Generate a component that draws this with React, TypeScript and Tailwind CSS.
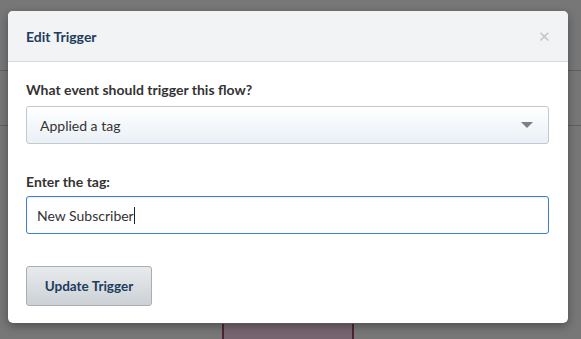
import React from "react";

export default function App() {
  return (
    <div
      className="relative w-[581px] h-[339px] overflow-hidden bg-[#777777]"
      style={{ fontFamily: "Lato, 'Open Sans', sans-serif" }}
    >
      {/* background page */}
      <div className="flex flex-col">
        <div className="h-[70px]" />
        <div className="h-px bg-[#5f5f5f]" />
        <div className="h-[54px]" />
        <div className="h-px bg-[#5f5f5f]" />
        <div className="h-[198px]" />
        <div className="ml-[222px] w-[132px] h-[40px] border-x-2 border-[#4d2338] bg-[#766570]" />
      </div>

      {/* modal */}
      <div className="absolute left-[8px] top-[11px] w-[560px] h-[312px] rounded-[5px] bg-white shadow-[0_3px_10px_rgba(0,0,0,0.35)] overflow-hidden flex flex-col">
        <div className="h-[51px] shrink-0 bg-[#f1f3f5] border-b border-[#d7dadd] flex items-center justify-between pl-[18px] pr-[17px]">
          <span className="text-[14px] font-bold text-[#1d3c5e]">Edit Trigger</span>
          <span className="text-[15px] leading-none text-[#c3c7cb]">✕</span>
        </div>
        <div className="flex flex-col px-[18px] pr-[19px] pt-[20px]">
          <label className="text-[14px] leading-[16px] font-bold text-[#333333]">
            What event should trigger this flow?
          </label>
          <div className="mt-[8px] h-[38px] rounded-[3px] border border-[#c3c8cc] bg-gradient-to-b from-[#ffffff] to-[#e9f0f6] flex items-center justify-between pl-[13px] pr-[15px]">
            <span className="text-[14px] text-[#333333]">Applied a tag</span>
            <span className="w-0 h-0 border-x-[6px] border-x-transparent border-t-[6px] border-t-[#7d7f82]" />
          </div>
          <label className="mt-[30px] text-[14px] leading-[16px] font-bold text-[#333333]">
            Enter the tag:
          </label>
          <div className="mt-[6px] h-[38px] rounded-[3px] border border-[#3d7fd6] bg-white flex items-center pl-[10px] shadow-[inset_0_1px_2px_rgba(0,0,0,0.08)]">
            <span className="text-[14px] text-[#333333]">New Subscriber</span>
            <span className="w-px h-[17px] bg-[#222222]" />
          </div>
          <div className="mt-[32px]">
            <button className="h-[40px] w-[126px] rounded-[3px] border border-[#a9aeb3] bg-gradient-to-b from-[#e8ebee] to-[#ccd1d5] text-[13.5px] font-bold text-[#1d3c5e]">
              Update Trigger
            </button>
          </div>
        </div>
      </div>
    </div>
  );
}
